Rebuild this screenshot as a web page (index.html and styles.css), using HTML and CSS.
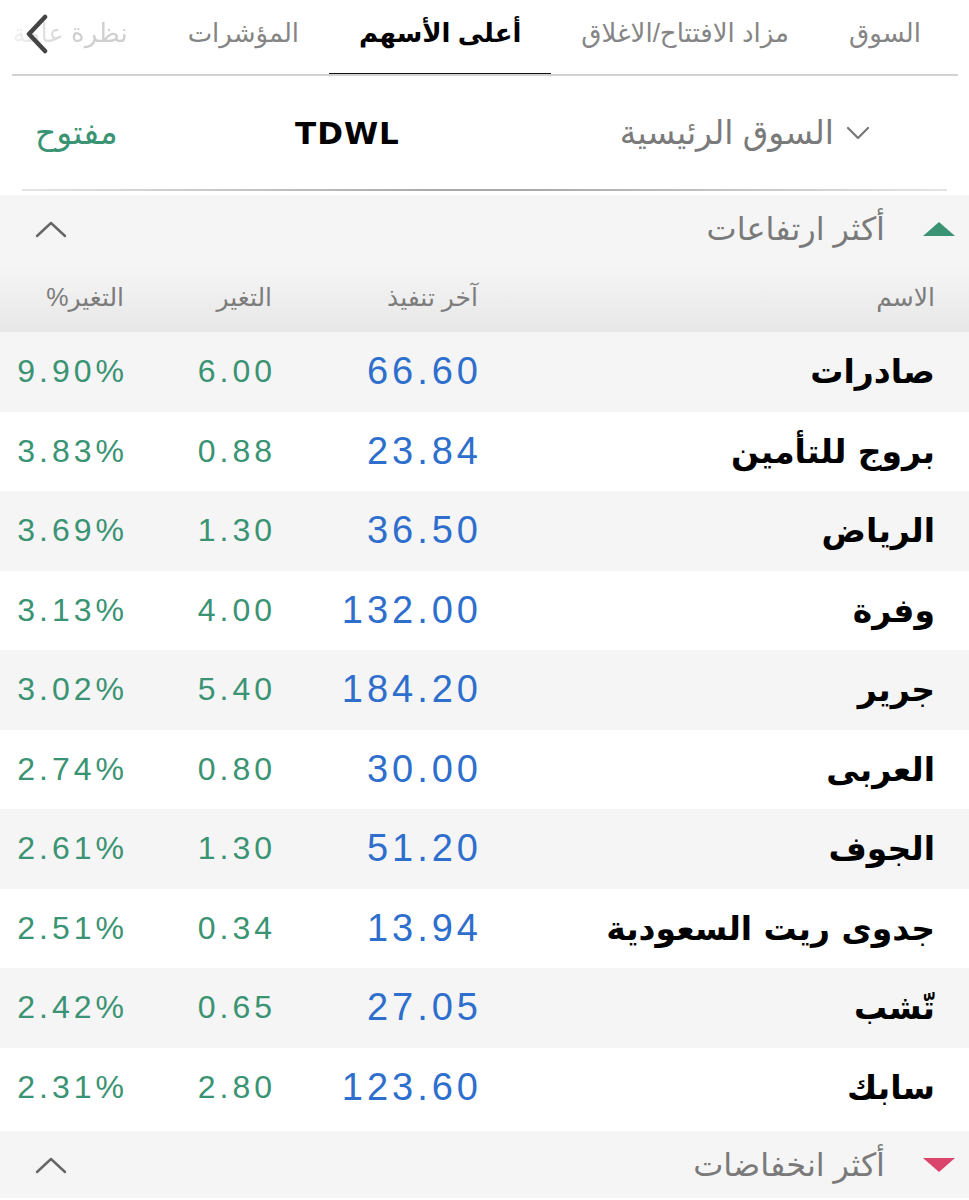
FILE: index.html
```html
<!DOCTYPE html>
<html lang="ar" dir="rtl">
<head>
    <meta charset="UTF-8">
    <meta name="viewport" content="width=device-width, initial-scale=1.0">
    <title>أعلى الأسهم</title>
    <link rel="stylesheet" href="styles.css">
</head>
<body>
    <nav class="tabs">
        <a class="tab">السوق</a>
        <a class="tab">مزاد الافتتاح/الاغلاق</a>
        <a class="tab active">أعلى الأسهم</a>
        <a class="tab">المؤشرات</a>
        <a class="tab faded">نظرة عامة</a>
        <button class="back-btn" aria-label="back">
            <svg width="26" height="40" viewBox="0 0 26 40"><path d="M21 3 L5 20 L21 37" fill="none" stroke="#444" stroke-width="4.5" stroke-linecap="round" stroke-linejoin="round"/></svg>
        </button>
    </nav>

    <header class="market-bar">
        <div class="market-select">
            <svg width="24" height="14" viewBox="0 0 24 14"><path d="M2 2 L12 12 L22 2" fill="none" stroke="#777" stroke-width="2.2" stroke-linecap="round" stroke-linejoin="round"/></svg>
            <span>السوق الرئيسية</span>
        </div>
        <div class="market-code">TDWL</div>
        <div class="market-status">مفتوح</div>
    </header>
    <div class="divider"></div>

    <section class="section-head">
        <span class="tri up"></span>
        <span class="section-title">أكثر ارتفاعات</span>
        <svg class="collapse" width="32" height="18" viewBox="0 0 32 18"><path d="M2 16 L16 3 L30 16" fill="none" stroke="#666" stroke-width="2.4" stroke-linecap="round" stroke-linejoin="round"/></svg>
    </section>

    <div class="table-head">
        <span>الاسم</span>
        <span>آخر تنفيذ</span>
        <span>التغير</span>
        <span>التغير%</span>
    </div>

    <div class="rows" id="gainers"></div>

    <section class="section-head">
        <span class="tri down"></span>
        <span class="section-title">أكثر انخفاضات</span>
        <svg class="collapse" width="32" height="18" viewBox="0 0 32 18"><path d="M2 16 L16 3 L30 16" fill="none" stroke="#666" stroke-width="2.4" stroke-linecap="round" stroke-linejoin="round"/></svg>
    </section>

    <script>
        const gainers = [
            ['صادرات', '66.60', '6.00', '9.90%'],
            ['بروج للتأمين', '23.84', '0.88', '3.83%'],
            ['الرياض', '36.50', '1.30', '3.69%'],
            ['وفرة', '132.00', '4.00', '3.13%'],
            ['جرير', '184.20', '5.40', '3.02%'],
            ['العربى', '30.00', '0.80', '2.74%'],
            ['الجوف', '51.20', '1.30', '2.61%'],
            ['جدوى ريت السعودية', '13.94', '0.34', '2.51%'],
            ['تّشب', '27.05', '0.65', '2.42%'],
            ['سابك', '123.60', '2.80', '2.31%']
        ];

        document.getElementById('gainers').innerHTML = gainers.map(([name, last, chg, pct]) => `
            <div class="row">
                <span class="name">${name}</span>
                <span class="num last">${last}</span>
                <span class="num chg">${chg}</span>
                <span class="num pct">${pct}</span>
            </div>
        `).join('');
    </script>
</body>
</html>
```

FILE: styles.css
```css
:root {
    --green: #3a9373;
    --blue: #2e6fcd;
    --red: #d9456a;
    --gray-text: #7c7c7c;
    --band: #f5f5f5;
}

* {
    margin: 0;
    padding: 0;
    box-sizing: border-box;
}

body {
    width: 969px;
    background: #fff;
    font-family: 'Liberation Sans', 'DejaVu Sans', sans-serif;
    color: #000;
}

/* tabs */
.tabs {
    position: relative;
    display: flex;
    align-items: center;
    height: 76px;
    margin: 0 11px 0 12px;
    padding-right: 7px;
    border-bottom: 2px solid #d2d2d2;
    overflow: hidden;
    white-space: nowrap;
}

.tab {
    flex: none;
    height: 100%;
    display: flex;
    align-items: center;
    padding: 0 30px 8px;
    font-size: 26px;
    color: #858585;
}

.tab.active {
    color: #000;
    font-weight: bold;
    box-shadow: inset 0 -3px 0 #111;
    margin-bottom: -2px;
    height: calc(100% + 2px);
    padding-bottom: 10px;
}

.tab.faded {
    color: #cfcfcf;
    padding-left: 0;
    -webkit-mask-image: linear-gradient(to left, #000 55%, rgba(0, 0, 0, 0.3));
}

.back-btn {
    position: absolute;
    left: 12px;
    top: 14px;
    border: none;
    background: none;
    padding: 0;
}

/* market bar */
.market-bar {
    display: flex;
    align-items: center;
    height: 113px;
    padding: 0 99px 0 35px;
    font-size: 33px;
}

.market-select {
    display: flex;
    align-items: center;
    gap: 12px;
    color: #7a7a7a;
}

.market-code {
    font-family: 'DejaVu Sans', sans-serif;
    font-weight: bold;
    font-size: 31px;
    letter-spacing: 1px;
    margin-right: 220px;
}

.market-status {
    margin-right: auto;
    color: var(--green);
}

.divider {
    height: 2px;
    margin: 0 22px;
    background: linear-gradient(to right, #e4e4e4, #a9a9a9 45%, #a9a9a9 55%, #e4e4e4);
}

/* section header */
.section-head {
    display: flex;
    align-items: center;
    height: 67px;
    margin-top: 4px;
    padding: 0 14px 0 35px;
    background: var(--band);
}

.tri {
    width: 0;
    height: 0;
    border-left: 16px solid transparent;
    border-right: 16px solid transparent;
    margin-left: 38px;
}

.tri.up {
    border-bottom: 14px solid var(--green);
}

.tri.down {
    border-top: 14px solid var(--red);
}

.section-title {
    flex: 1;
    font-size: 32px;
    color: #7a7a7a;
}

.collapse {
    flex: none;
}

/* table */
.table-head,
.row {
    display: grid;
    grid-template-columns: 457px 206px 148px 1fr;
    align-items: center;
    padding-right: 34px;
}

.table-head {
    height: 70px;
    background: linear-gradient(#f6f6f6, #e7e7e7);
    font-size: 25px;
    color: var(--gray-text);
}

.row {
    height: 79.5px;
}

.row:nth-child(odd) {
    background: var(--band);
}

.name {
    font-size: 33px;
    font-weight: bold;
    font-family: 'DejaVu Sans', sans-serif;
}

.num {
    direction: ltr;
    text-align: right;
    letter-spacing: 4px;
    margin-right: -4px;
}

.last {
    font-size: 38px;
    color: var(--blue);
}

.chg,
.pct {
    font-size: 32px;
    color: var(--green);
}
```
